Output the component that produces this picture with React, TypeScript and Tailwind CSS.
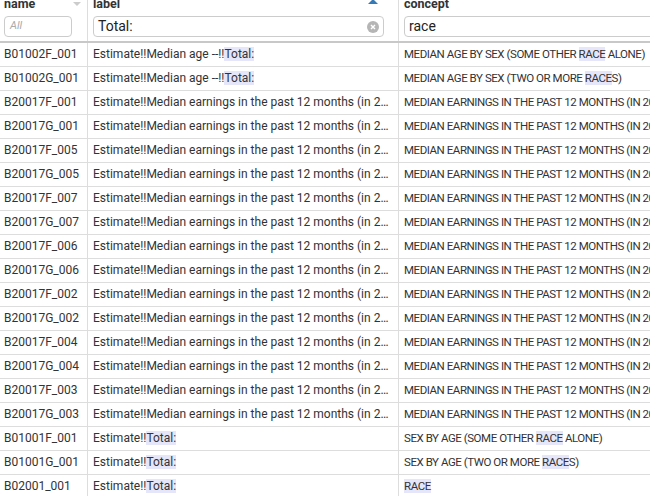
import React from 'react';

type Part = string | { hl: string };

interface Row {
    name: string;
    label: Part[];
    concept: Part[];
}

const earn: Part[] = ['Estimate!!Median earnings in the past 12 months (in 2019 inflation-adjusted dollars)'];
const earnConcept: Part[] = ['MEDIAN EARNINGS IN THE PAST 12 MONTHS (IN 2019 INFLATION-ADJUSTED DOLLARS)'];

const rows: Row[] = [
    { name: 'B01002F_001', label: ['Estimate!!Median age --!!', { hl: 'Total:' }], concept: ['MEDIAN AGE BY SEX (SOME OTHER ', { hl: 'RACE' }, ' ALONE)'] },
    { name: 'B01002G_001', label: ['Estimate!!Median age --!!', { hl: 'Total:' }], concept: ['MEDIAN AGE BY SEX (TWO OR MORE ', { hl: 'RACE' }, 'S)'] },
    ...['B20017F_001', 'B20017G_001', 'B20017F_005', 'B20017G_005', 'B20017F_007', 'B20017G_007', 'B20017F_006', 'B20017G_006', 'B20017F_002', 'B20017G_002', 'B20017F_004', 'B20017G_004', 'B20017F_003', 'B20017G_003'].map((n) => ({ name: n, label: earn, concept: earnConcept })),
    { name: 'B01001F_001', label: ['Estimate!!', { hl: 'Total:' }], concept: ['SEX BY AGE (SOME OTHER ', { hl: 'RACE' }, ' ALONE)'] },
    { name: 'B01001G_001', label: ['Estimate!!', { hl: 'Total:' }], concept: ['SEX BY AGE (TWO OR MORE ', { hl: 'RACE' }, 'S)'] },
    { name: 'B02001_001', label: ['Estimate!!', { hl: 'Total:' }], concept: [{ hl: 'RACE' }] },
];

function Text({ parts }: { parts: Part[] }) {
    return (
        <>
            {parts.map((p, i) =>
                typeof p === 'string' ? <span key={i}>{p}</span> : <span key={i} className="bg-[#e6e6fa]">{p.hl}</span>
            )}
        </>
    );
}

export default function App() {
    return (
        <div className="w-[650px] h-[496px] overflow-hidden bg-white text-[#333] text-[12px]" style={{ fontFamily: 'Roboto, "Noto Sans", sans-serif' }}>
            <div className="w-[650px]">
                {/* header */}
                <div className="flex h-[43px] border-b-2 border-[#c8c8c8]">
                    <div className="w-[88px] shrink-0 border-r border-[#ddd] px-[4px] relative">
                        <div className="font-bold text-[12.5px] leading-[12px] -mt-[2px] h-[18px]">name</div>
                        <span className="absolute right-[6px] top-[2px] w-0 h-0 border-l-[4px] border-r-[4px] border-t-[4px] border-l-transparent border-r-transparent border-t-[#ccc]" />
                        <div className="w-[68px] h-[21px] border border-[#ccc] rounded-[4px] flex items-center px-[5px] text-[11px] italic text-[#aaa]">All</div>
                    </div>
                    <div className="w-[311px] shrink-0 border-r border-[#ddd] px-[5px] relative">
                        <div className="font-bold text-[12.5px] leading-[12px] -mt-[2px] h-[18px]">label</div>
                        <span className="absolute right-[20px] -top-[1px] w-0 h-0 border-l-[5px] border-r-[5px] border-b-[5px] border-l-transparent border-r-transparent border-b-[#337ab7]" />
                        <div className="w-[291px] h-[21px] border border-[#ccc] rounded-[4px] flex items-center pl-[4px] pr-[4px] text-[14px] text-[#222]">
                            <span className="flex-1">Total:</span>
                            <span className="w-[12px] h-[12px] rounded-full bg-[#b5b5b5] flex items-center justify-center">
                                <svg width="6" height="6" viewBox="0 0 6 6"><path d="M1 1L5 5M5 1L1 5" stroke="#fff" strokeWidth="1.4" /></svg>
                            </span>
                        </div>
                    </div>
                    <div className="flex-1 min-w-0 pl-[5px]">
                        <div className="font-bold text-[12.5px] leading-[12px] -mt-[2px] h-[18px]">concept</div>
                        <div className="w-[400px] h-[21px] border border-[#ccc] rounded-[4px] flex items-center px-[4px] text-[14px] text-[#222]">race</div>
                    </div>
                </div>
                {/* body */}
                {rows.map((r) => (
                    <div key={r.name} className="flex h-[24px] border-b border-[#ddd] leading-[23px]">
                        <div className="w-[88px] shrink-0 border-r border-[#ddd] px-[4px] whitespace-nowrap overflow-hidden">{r.name}</div>
                        <div className="w-[311px] shrink-0 border-r border-[#ddd] px-[5px] whitespace-nowrap overflow-hidden text-ellipsis">
                            <Text parts={r.label} />
                        </div>
                        <div className="flex-1 min-w-0 pl-[5px] whitespace-nowrap overflow-hidden text-[11.5px] tracking-[-0.45px]">
                            <Text parts={r.concept} />
                        </div>
                    </div>
                ))}
            </div>
        </div>
    );
}
